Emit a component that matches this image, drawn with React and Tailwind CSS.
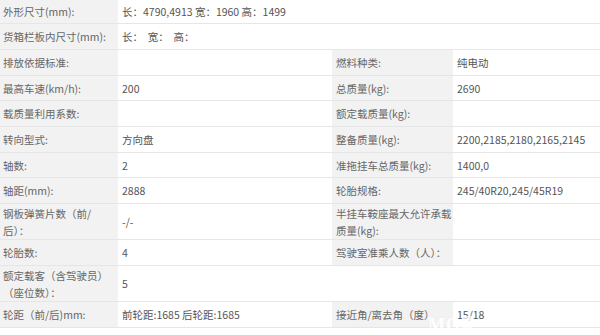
import React from "react";

const rows = [
  { h: "h-[24px]", cells: [["外形尺寸(mm):", "长：4790,4913 宽：1960 高：1499"]] },
  { h: "h-[26px]", cells: [["货箱栏板内尺寸(mm):", "长：  宽：  高："]] },
  { h: "h-[26px]", cells: [["排放依据标准:", ""], ["燃料种类:", "纯电动"]] },
  { h: "h-[25px]", cells: [["最高车速(km/h):", "200"], ["总质量(kg):", "2690"]] },
  { h: "h-[26px]", cells: [["载质量利用系数:", ""], ["额定载质量(kg):", ""]] },
  { h: "h-[26px]", cells: [["转向型式:", "方向盘"], ["整备质量(kg):", "2200,2185,2180,2165,2145"]] },
  { h: "h-[25px]", cells: [["轴数:", "2"], ["准拖挂车总质量(kg):", "1400,0"]] },
  { h: "h-[26px]", cells: [["轴距(mm):", "2888"], ["轮胎规格:", "245/40R20,245/45R19"]] },
  {
    h: "h-[36px]",
    cells: [
      [["钢板弹簧片数（前/", "后）："], "-/-"],
      [["半挂车鞍座最大允许承载", "质量(kg):"], ""],
    ],
  },
  { h: "h-[26px]", cells: [["轮胎数:", "4"], ["驾驶室准乘人数（人）：", ""]] },
  { h: "h-[36px]", cells: [[["额定载客（含驾驶员）", "（座位数）："], "5"]] },
  { h: "h-[26px]", cells: [["轮距（前/后)mm:", "前轮距:1685 后轮距:1685"], ["接近角/离去角（度）", "15/18"]] },
];

function Label({ text, first }) {
  const lines = Array.isArray(text) ? text : [text];
  return (
    <div
      className={`flex flex-col justify-center bg-[#f2f2f2] text-[#666] ${
        first ? "pl-[3px]" : "pl-[4px]"
      }`}
    >
      {lines.map((l, i) => (
        <span key={i} className="whitespace-nowrap">
          {l}
        </span>
      ))}
    </div>
  );
}

function Value({ text, span }) {
  return (
    <div
      className={`flex items-center pl-[4px] text-[#555] whitespace-pre ${
        span ? "col-span-3" : ""
      }`}
    >
      {text}
    </div>
  );
}

export default function App() {
  return (
    <div
      className="relative w-[600px] h-[335px] overflow-hidden bg-white text-[10.5px] leading-[17px]"
      style={{ fontFamily: '"Noto Sans CJK SC", "Noto Sans", sans-serif' }}
    >
      {rows.map((row, i) => (
        <div
          key={i}
          className={`grid grid-cols-[118px_214px_121px_1fr] border-b border-[#e6e6e6] ${row.h}`}
        >
          <Label text={row.cells[0][0]} first />
          <Value text={row.cells[0][1]} span={row.cells.length === 1} />
          {row.cells[1] && (
            <>
              <Label text={row.cells[1][0]} />
              <Value text={row.cells[1][1]} />
            </>
          )}
        </div>
      ))}
      {/* watermark over the last row */}
      <div
        className="absolute left-[428px] top-[316px] text-[18px] leading-[18px] font-bold text-white/90 tracking-[1px]"
        style={{ fontFamily: '"Liberation Serif", serif' }}
      >
        MO
      </div>
      <div className="absolute left-[462px] top-[316px] w-[10px] h-[18px] bg-white/70" />
    </div>
  );
}
